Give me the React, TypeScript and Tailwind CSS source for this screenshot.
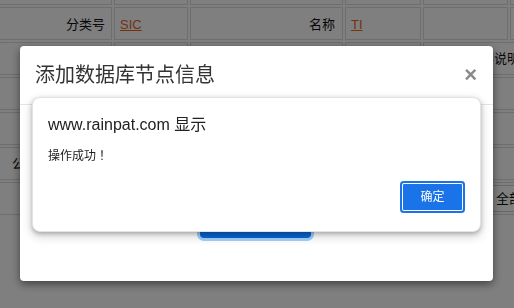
import * as React from "react";

const FONT = "font-['Liberation_Sans','Noto_Sans_CJK_SC',sans-serif]";
const CJK = "font-['Noto_Sans_CJK_SC','Liberation_Sans',sans-serif]";
const CELL = "border border-[#dcdcdc] h-[33px] p-0 text-[13px] text-[#111]";

function BackgroundTable() {
  return (
    <table className="table-fixed border-separate border-spacing-[2px] -mt-[30px] -ml-[20px] w-[592px]">
      <colgroup>
        <col className="w-[130px]" />
        <col className="w-[74px]" />
        <col className="w-[153px]" />
        <col className="w-[76px]" />
        <col className="w-[85px]" />
        <col className="w-[60px]" />
      </colgroup>
      <tbody>
        <tr>
          <td className={CELL} />
          <td className={CELL} />
          <td className={CELL} />
          <td className={CELL} />
          <td className={CELL} />
          <td className={CELL} />
        </tr>
        <tr>
          <td className={`${CELL} text-right pr-[6px] pt-[3px]`}>分类号</td>
          <td className={`${CELL} pl-[5px] pt-[3px]`}>
            <a className="text-[#e8641c] underline">SIC</a>
          </td>
          <td className={`${CELL} text-right pr-[7px] pt-[3px]`}>名称</td>
          <td className={`${CELL} pl-[5px] pt-[3px]`}>
            <a className="text-[#e8641c] underline">TI</a>
          </td>
          <td className={CELL} />
          <td className={CELL} />
        </tr>
        <tr>
          <td className={CELL} />
          <td className={CELL} />
          <td className={CELL} />
          <td className={CELL} />
          <td className={`${CELL} pl-[44px] whitespace-nowrap`} colSpan={2}>
            简要说明
          </td>
        </tr>
        <tr>
          <td className={CELL} />
          <td className={CELL} />
          <td className={CELL} />
          <td className={CELL} />
          <td className={CELL} colSpan={2} />
        </tr>
        <tr>
          <td className={CELL} />
          <td className={CELL} />
          <td className={CELL} />
          <td className={CELL} />
          <td className={CELL} colSpan={2} />
        </tr>
        <tr>
          <td className={`${CELL} pl-[29px] whitespace-nowrap`}>公开号</td>
          <td className={CELL} />
          <td className={CELL} />
          <td className={CELL} />
          <td className={CELL} colSpan={2} />
        </tr>
        <tr>
          <td className={CELL} />
          <td className={CELL} />
          <td className={CELL} />
          <td className={CELL} />
          <td className={`${CELL} pl-[68px]`} colSpan={2}>
            <span className="inline-flex h-[27px] items-center border border-[#cfcfcf] pl-[3px] pr-[10px] whitespace-nowrap">
              全部
            </span>
          </td>
        </tr>
      </tbody>
    </table>
  );
}

export default function App() {
  return (
    <div className={`relative h-[308px] w-[514px] overflow-hidden bg-white ${FONT}`}>
      <BackgroundTable />

      {/* backdrop */}
      <div className="fixed inset-0 bg-black/50" />

      {/* page modal */}
      <div className="fixed left-[20px] top-[46px] w-[473px] h-[235px] rounded-[4px] bg-white shadow-[0_3px_9px_rgba(0,0,0,0.5)]">
        <div className="h-[59px] px-[15px] flex items-center justify-between border-b border-[#e5e5e5]">
          <h4 className="text-[20px] leading-[24px] text-[#333]">添加数据库节点信息</h4>
          <span className="text-[22px] leading-none font-bold text-[#8a8a8a] pr-[1px]">×</span>
        </div>
        <div className="pt-[100px] flex justify-center pr-[2px]">
          <button className="w-[111px] h-[33px] rounded-[4px] bg-[#0866d4] ring-[3px] ring-[#a3cff8]" />
        </div>
      </div>

      {/* browser alert */}
      <div className="fixed left-[32px] top-[97px] w-[449px] h-[135px] rounded-[8px] bg-white border border-[#e3e3e3] shadow-[0_2px_4px_rgba(0,0,0,0.25),0_4px_10px_2px_rgba(0,0,0,0.12)] pt-[17px] px-[15px]">
        <p className="text-[16px] leading-[20px] text-[#202124]">www.rainpat.com 显示</p>
        <p className={`mt-[12px] text-[12px] leading-[16px] text-[#202124] ${CJK}`}>
          操作成功<span className="font-['Noto_Sans_CJK_TC',sans-serif]">！</span>
        </p>
        <div className="mt-[18px] flex justify-end">
          <button className="w-[65px] h-[32px] rounded-[4px] bg-[#1a73e8] text-white text-[12px] shadow-[inset_0_0_0_2px_#1a73e8,inset_0_0_0_3px_#ffffff]">
            确定
          </button>
        </div>
      </div>
    </div>
  );
}
